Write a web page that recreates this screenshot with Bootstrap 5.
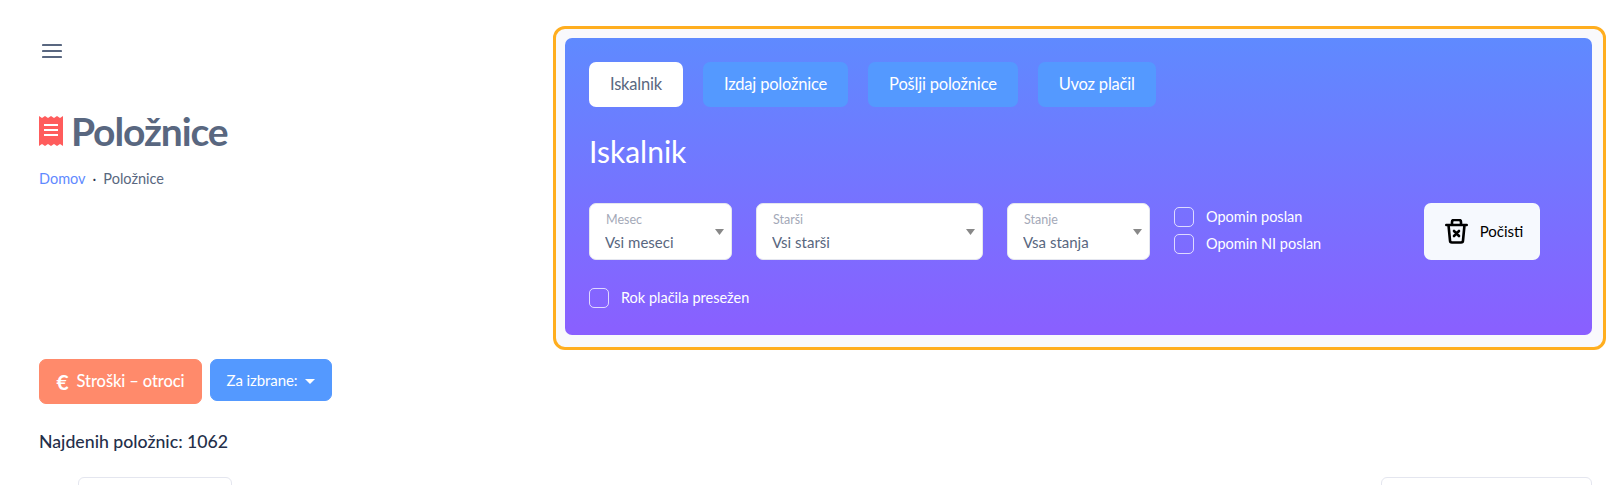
<!DOCTYPE html>
<html lang="sl">
<head>
    <meta charset="UTF-8">
    <title>Položnice</title>
    <meta name="viewport" content="width=device-width, initial-scale=1">
    <link href="https://cdn.jsdelivr.net/npm/bootstrap@5.3.3/dist/css/bootstrap.min.css" rel="stylesheet">
    <style>
    html, body { overflow: hidden; height: 100%; }
    body { background: #fff; color: #596780; font-family: Lato, "Liberation Sans", sans-serif; font-size: 15px; }
    .page-wrap { padding: 26px 16px 0 39px; }
    .top-row { height: 324px; }
    .head-col { width: 514px; flex: none; }
    .menu-toggle { margin: 17px 0 0 3px; width: 20px; height: 16px; display: block; }
    .page-title { color: #596780; font-size: 39px; font-weight: 700; letter-spacing: -1.100px; margin: 0; line-height: 48px; }
    .title-row { margin-top: 48px; gap: 8px; }
    .crumbs { font-size: 14.500px; margin: 13px 0 0; --bs-breadcrumb-divider: "·"; --bs-breadcrumb-item-padding-x: 7px; --bs-breadcrumb-divider-color: #2c3550; }
    .crumbs a { color: #5f8aff; text-decoration: none; }
    .crumbs .active { color: #596780; }
    .search-frame { width: 1053px; flex: none; border: 3px solid #ffae1f; border-radius: 12px; padding: 9px 11px 10px 9px; background: #f9f9fc; }
    .search-panel { height: 297px; border-radius: 7px; padding: 24px 24px 0; background: linear-gradient(180deg, #5f8aff 0%, #8a5fff 100%); color: #fff; }
    .tabs-row { gap: 20px; }
    .tab-btn { height: 45px; padding: 0 21px; border: 0; border-radius: 7px; background: #5499ff; color: #fff; font-size: 16.500px; letter-spacing: -.2px; white-space: nowrap; }
    .tab-btn.active { background: #fff; color: #596780; }
    .panel-title { font-size: 30px; font-weight: 400; line-height: 40px; margin: 24px 0 0; }
    .filter-row { margin-top: 32px; height: 57px; }
    .sel-s { width: 143px; }
    .sel-l { width: 227px; margin: 0 24px; }
    .search-panel .form-select { height: 57px; min-height: 57px; padding: 22px 24px 0 15px; border: 1px solid #e4e6ef; border-radius: 7px; color: #596780; font-size: 15px; background-size: 9px 6px; background-position: right 7px center; background-image: url("data:image/svg+xml,%3Csvg xmlns='http://www.w3.org/2000/svg' viewBox='0 0 9 6'%3E%3Cpath fill='%23888' d='M0 0h9L4.500 6z'/%3E%3C/svg%3E"); }
    .search-panel .form-floating > label { padding: 7px 16px; color: #a4a9b8; font-size: 12.500px; transform: none !important; opacity: 1 !important; height: auto; }
    .search-panel .form-floating > label::after { display: none; }
    .check-col { margin-left: 24px; width: 250px; }
    .check-line { display: flex; align-items: center; gap: 12px; height: 27px; margin: 0; font-size: 14.500px; color: #fff; }
    .check-line .form-check-input { width: 20px; height: 20px; margin: 0; background-color: transparent; border: 1px solid rgba(255,255,255,.75); border-radius: 5px; }
    .clear-btn { width: 116px; height: 57px; padding: 0 0 0 4px; border: 0; border-radius: 7px; background: #f6f9fe; color: #000; font-size: 15px; gap: 12px; }
    .late-check { margin-top: 24px; }
    .cost-btn { height: 45px; width: 163px; padding: 0; background: #ff8a6b; border-color: #ff8a6b; color: #fff; font-size: 16.500px; font-weight: 500; letter-spacing: -.1px; border-radius: 7px; gap: 8px; white-space: nowrap; }
    .euro-mark { font-size: 21px; font-weight: 700; }
    .pick-btn { height: 42px; width: 122px; padding: 0; background: #5499ff; border-color: #5499ff; color: #fff; font-size: 15px; letter-spacing: -.1px; border-radius: 7px; white-space: nowrap; }
    .pick-btn::after { margin-left: 8px; border-top-width: 5px; border-right-width: 5px; border-left-width: 5px; vertical-align: 2px; }
    .action-row { margin-top: 9px; gap: 8px; align-items: flex-start; }
    .found-count { font-size: 17.700px; font-weight: 500; color: #252f4a; margin: 26px 0 0; line-height: 24px; white-space: nowrap; }
    .list-tools { margin-top: 23px; padding-right: 13px; }
    .len-label { width: 39px; font-size: 14px; padding-top: 5px; line-height: 18px; }
    .len-input { width: 154px; height: 34px; border: 1px solid #e4e6ef; border-radius: 6px; }
    .find-input { width: 211px; height: 34px; border: 1px solid #e4e6ef; border-radius: 6px; }
    </style>
</head>
<body>
<div class="page-wrap">
    <div class="d-flex top-row">
        <div class="head-col">
            <svg class="menu-toggle" viewBox="0 0 20 16" aria-label="Meni"><path d="M1 2h18M1 8h18M1 14h18" stroke="#596780" stroke-width="2.200" stroke-linecap="round" fill="none"/></svg>
            <div class="d-flex align-items-center title-row">
                <svg width="24" height="32" viewBox="0 0 24 32"><path fill="#ff5c5c" d="M0 1l3 2 3-2 3 2 3-2 3 2 3-2 3 2 3-2v30l-3-2-3 2-3-2-3 2-3-2-3 2-3-2-3 2z"/><path d="M5 10h14M5 15h14M5 20h14" stroke="#fff" stroke-width="2"/></svg>
                <h1 class="page-title">Položnice</h1>
            </div>
            <nav aria-label="breadcrumb">
                <ol class="breadcrumb crumbs">
                    <li class="breadcrumb-item"><a href="#">Domov</a></li>
                    <li class="breadcrumb-item active" aria-current="page">Položnice</li>
                </ol>
            </nav>
        </div>
        <div class="search-frame">
            <div class="search-panel">
                <div class="d-flex tabs-row">
                    <button type="button" class="btn tab-btn active">Iskalnik</button>
                    <button type="button" class="btn tab-btn">Izdaj položnice</button>
                    <button type="button" class="btn tab-btn">Pošlji položnice</button>
                    <button type="button" class="btn tab-btn">Uvoz plačil</button>
                </div>
                <h2 class="panel-title">Iskalnik</h2>
                <div class="d-flex filter-row">
                    <div class="form-floating sel-s">
                        <select class="form-select" id="fMesec"><option>Vsi meseci</option></select>
                        <label for="fMesec">Mesec</label>
                    </div>
                    <div class="form-floating sel-l">
                        <select class="form-select" id="fStarsi"><option>Vsi starši</option></select>
                        <label for="fStarsi">Starši</label>
                    </div>
                    <div class="form-floating sel-s">
                        <select class="form-select" id="fStanje"><option>Vsa stanja</option></select>
                        <label for="fStanje">Stanje</label>
                    </div>
                    <div class="check-col">
                        <label class="check-line"><input class="form-check-input" type="checkbox">Opomin poslan</label>
                        <label class="check-line"><input class="form-check-input" type="checkbox">Opomin NI poslan</label>
                    </div>
                    <button type="button" class="btn clear-btn d-flex align-items-center justify-content-center">
                        <svg width="23" height="25" viewBox="0 0 23 25" fill="none" stroke="#000" stroke-width="2.600" stroke-linejoin="round" stroke-linecap="round"><path d="M7 5V3a2 2 0 0 1 2-2h5a2 2 0 0 1 2 2v2M1.300 6h20.400M3.500 6l1.500 15.500a2 2 0 0 0 2 2h9a2 2 0 0 0 2-2L19.500 6"/><path d="M9 12l5 5M14 12l-5 5"/></svg>
                        Počisti
                    </button>
                </div>
                <label class="check-line late-check"><input class="form-check-input" type="checkbox">Rok plačila presežen</label>
            </div>
        </div>
    </div>
    <div class="d-flex action-row">
        <button type="button" class="btn cost-btn d-flex align-items-center justify-content-center"><span class="euro-mark">€</span>Stroški – otroci</button>
        <div class="dropdown">
            <button type="button" class="btn pick-btn dropdown-toggle" data-bs-toggle="dropdown">Za izbrane:</button>
        </div>
    </div>
    <p class="found-count">Najdenih položnic: 1062</p>
    <div class="d-flex justify-content-between list-tools">
        <div class="d-flex"><span class="len-label">Kaži</span><div class="len-input"></div></div>
        <div class="find-input"></div>
    </div>
</div>
<script src="https://cdn.jsdelivr.net/npm/bootstrap@5.3.3/dist/js/bootstrap.bundle.min.js"></script>
</body>
</html>
